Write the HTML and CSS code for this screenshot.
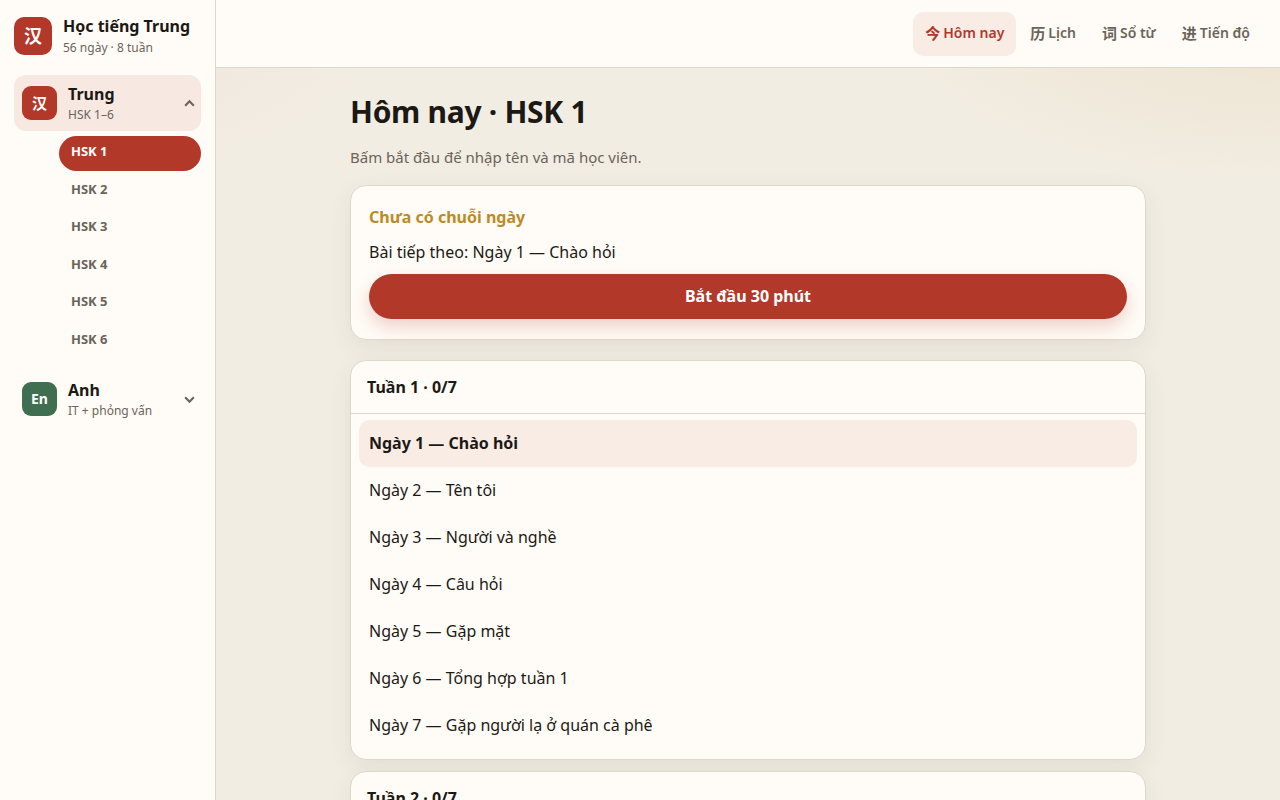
FILE: index.html
```html
<!doctype html>
<html lang="vi">
<head>
<meta charset="utf-8">
<meta name="viewport" content="width=device-width, initial-scale=1">
<title>Học tiếng Trung</title>
<link rel="stylesheet" href="styles.css">
</head>

<body>
<div class="app">
	<aside class="sidebar">
		<div class="brand">
			<span class="brand-logo" lang="zh">汉</span>
			<div>
				<strong class="brand-name">Học tiếng Trung</strong>
				<span class="small">56 ngày · 8 tuần</span>
			</div>
		</div>
		<button type="button" class="lang active" aria-expanded="true">
			<span class="lang-icon" lang="zh">汉</span>
			<span class="lang-text">
				<span class="lang-name">Trung</span>
				<span class="small">HSK 1–6</span>
			</span>
			<svg class="chevron" viewBox="0 0 12 12"><path d="M2 8l4-4 4 4"/></svg>
		</button>
		<ul class="levels">
			<li><a href="#hsk1" class="active">HSK 1</a></li>
			<li><a href="#hsk2">HSK 2</a></li>
			<li><a href="#hsk3">HSK 3</a></li>
			<li><a href="#hsk4">HSK 4</a></li>
			<li><a href="#hsk5">HSK 5</a></li>
			<li><a href="#hsk6">HSK 6</a></li>
		</ul>
		<button type="button" class="lang" aria-expanded="false">
			<span class="lang-icon en">En</span>
			<span class="lang-text">
				<span class="lang-name">Anh</span>
				<span class="small">IT + phỏng vấn</span>
			</span>
			<svg class="chevron" viewBox="0 0 12 12"><path d="M2 4l4 4 4-4"/></svg>
		</button>
	</aside>

	<div class="page">
		<header class="topbar">
			<nav class="tabs">
				<a href="#today" class="active"><span lang="zh">今</span>Hôm nay</a>
				<a href="#calendar"><span lang="zh">历</span>Lịch</a>
				<a href="#words"><span lang="zh">词</span>Sổ từ</a>
				<a href="#progress"><span lang="zh">进</span>Tiến độ</a>
			</nav>
		</header>

		<main class="content">
			<h1>Hôm nay · HSK 1</h1>
			<p class="lead">Bấm bắt đầu để nhập tên và mã học viên.</p>

			<section class="card next">
				<p class="streak">Chưa có chuỗi ngày</p>
				<p class="lesson">Bài tiếp theo: Ngày 1 — Chào hỏi</p>
				<button type="button" class="start">Bắt đầu 30 phút</button>
			</section>

			<details class="card week" open>
				<summary>Tuần 1 · 0/7</summary>
				<div class="days">
					<a href="#d1" class="active">Ngày 1 — Chào hỏi</a>
					<a href="#d2">Ngày 2 — Tên tôi</a>
					<a href="#d3">Ngày 3 — Người và nghề</a>
					<a href="#d4">Ngày 4 — Câu hỏi</a>
					<a href="#d5">Ngày 5 — Gặp mặt</a>
					<a href="#d6">Ngày 6 — Tổng hợp tuần 1</a>
					<a href="#d7">Ngày 7 — Gặp người lạ ở quán cà phê</a>
				</div>
			</details>
			<details class="card week">
				<summary>Tuần 2 · 0/7</summary>
			</details>
		</main>
	</div>
</div>
</body>
</html>
```
FILE: styles.css
```css
*{box-sizing:border-box; margin:0; padding:0;}
:root{
	--ink:#1c1915;
	--muted:#6b645a;
	--paper:#fffcf7;
	--line:#dfd8ca;
	--red:#b2382a;
	--red-soft:#f9ece5;
	--green:#3f6f50;
	--gold:#bc8b28;
}
body{
	font-family:"Noto Sans","Noto Sans CJK SC",sans-serif;
	font-size:16px;
	line-height:24px;
	color:var(--ink);
	background:
		radial-gradient(700px 320px at 0 0, rgba(179,54,41,0.06), transparent 60%),
		radial-gradient(700px 320px at 100% 0, rgba(200,150,50,0.12), transparent 60%),
		#f2ede3;
}
a{color:inherit; text-decoration:none;}
button{font:inherit; color:inherit; border:0; cursor:pointer;}
ul{list-style:none;}

.app{display:flex; min-height:100vh;}

/* sidebar */
.sidebar{width:216px; flex:none; padding:14px; background:var(--paper); border-right:1px solid var(--line);}
.brand{display:flex; align-items:center; gap:11px; padding-bottom:18px;}
.brand-logo,.lang-icon{display:grid; place-items:center; flex:none; background:var(--red); color:#fff; font-weight:700;}
.brand-logo{width:38px; height:38px; border-radius:10px; font-size:18px;}
.brand-name{display:block; line-height:24px;}
.small{display:block; font-size:12px; line-height:19px; color:var(--muted); font-weight:400;}
.lang{display:flex; align-items:center; gap:11px; width:100%; height:56px; padding:0 5px 0 8px; border-radius:12px; background:none; text-align:left;}
.lang.active{background:#f7e8e2;}
.lang-icon{width:35px; height:34px; border-radius:9px; font-size:15px;}
.lang-icon.en{background:var(--green); font-size:14px;}
.lang-text{flex:1;}
.lang-name{display:block; line-height:22px; font-weight:700;}
.chevron{width:13px; height:13px; fill:none; stroke:var(--muted); stroke-width:2;}
.levels{display:flex; flex-direction:column; justify-content:space-between; height:223px; margin:5px 0 12px 45px;}
.levels a{display:block; height:35px; padding:5px 12px 0; border-radius:18px; font-size:13px; line-height:21px; font-weight:700; color:var(--muted);}
.levels a.active{background:var(--red); color:#fff;}

/* top bar */
.page{flex:1; min-width:0; display:flex; flex-direction:column;}
.topbar{flex:none; padding:12px 18px 11px; background:var(--paper); border-bottom:1px solid var(--line);}
.tabs{display:flex; justify-content:flex-end; gap:2px;}
.tabs a{display:flex; align-items:center; gap:3px; height:44px; padding:0 12px 2px; border-radius:10px; font-size:14px; font-weight:600; color:var(--muted);}
.tabs span{font-size:15px;}
.tabs a.active{background:var(--red-soft); color:var(--red);}

/* content */
.content{flex:1; width:100%; max-width:828px; margin:0 auto; padding:24px 16px;}
h1{font-size:30px; line-height:40px; letter-spacing:-0.01em;}
.lead{margin:13px 0 16px; font-size:15px; color:var(--muted);}
.card{background:var(--paper); border:1px solid var(--line); border-radius:16px; box-shadow:0 8px 24px rgba(44,52,32,0.07);}
.next{margin-bottom:20px; padding:19px 18px 20px;}
.streak{font-weight:700; color:var(--gold);}
.lesson{margin:11px 0 10px;}
.start{display:block; width:100%; height:45px; padding-bottom:2px; border-radius:23px; background:var(--red); color:#fff; font-weight:700; box-shadow:0 8px 18px rgba(179,54,41,0.22);}
.week{margin-bottom:11px;}
.week summary{padding:14px 16px; font-weight:700; list-style:none; cursor:pointer;}
.week[open] summary{border-bottom:1px solid var(--line);}
.days{display:grid; padding:6px 8px 10px;}
.days a{padding:12px 10px; line-height:23px; border-radius:10px;}
.days a.active{background:var(--red-soft); font-weight:700;}
```
